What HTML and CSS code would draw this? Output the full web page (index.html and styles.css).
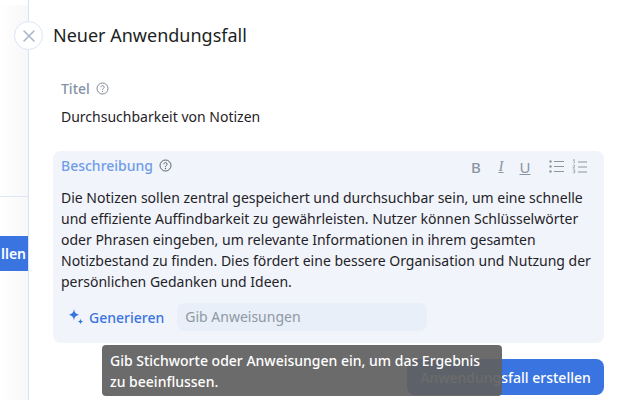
FILE: index.html
```html
<!DOCTYPE html>
<html lang="de">
<head>
  <meta charset="UTF-8" />
  <title>Neuer Anwendungsfall</title>
  <link rel="stylesheet" href="styles.css">
</head>
<body>
  <div class="app">
    <aside class="side">
      <div class="side-top"></div>
      <div class="side-mid">
        <div class="side-btn">llen</div>
      </div>
    </aside>
    <main class="panel">
      <button class="close" aria-label="Schließen">
        <svg width="14" height="14" viewBox="0 0 14 14"><path d="M2 2l10 10M12 2L2 12" stroke="#a6b5cc" stroke-width="1.5" stroke-linecap="round" fill="none"/></svg>
      </button>
      <h1 class="title">Neuer Anwendungsfall</h1>

      <section class="field">
        <div class="label">Titel
          <svg class="help" width="13" height="13" viewBox="0 0 13 13"><circle cx="6.5" cy="6.5" r="5.5" fill="none" stroke="#7c8794" stroke-width="1"/><path d="M4.9 5.2a1.6 1.6 0 1 1 2.5 1.3c-.6.4-.9.7-.9 1.3" fill="none" stroke="#7c8794"/><circle cx="6.5" cy="9.5" r=".7" fill="#7c8794"/></svg>
        </div>
        <div class="value">Durchsuchbarkeit von Notizen</div>
      </section>

      <section class="editor">
        <div class="editor-head">
          <div class="label label-active">Beschreibung
            <svg class="help" width="13" height="13" viewBox="0 0 13 13"><circle cx="6.5" cy="6.5" r="5.5" fill="none" stroke="#555f6b" stroke-width="1"/><path d="M4.9 5.2a1.6 1.6 0 1 1 2.5 1.3c-.6.4-.9.7-.9 1.3" fill="none" stroke="#555f6b"/><circle cx="6.5" cy="9.5" r=".7" fill="#555f6b"/></svg>
          </div>
          <div class="tools">
            <span class="tool tool-b">B</span>
            <span class="tool tool-i">I</span>
            <span class="tool tool-u">U</span>
            <svg class="tool-list" width="15" height="13" viewBox="0 0 15 13"><g fill="#8b95a3"><circle cx="1.500" cy="1.500" r="1.200"/><circle cx="1.500" cy="6.500" r="1.200"/><circle cx="1.500" cy="11.500" r="1.200"/></g><path d="M5 1.500h10M5 6.500h10M5 11.500h10" stroke="#8b95a3" stroke-width="1.200"/></svg>
            <svg class="tool-num" width="15" height="16" viewBox="0 0 15 16"><path d="M6 3h9M6 8h9M6 13h9" stroke="#8b95a3" stroke-width="1.200"/><path d="M1 1.200l1.200-.7v4M.8 6.600c.5-.7 2-.6 2 .3 0 .8-1.400 1.200-2 2.100h2.200M.9 11c.6-.5 2-.4 2 .4 0 .5-.5.7-1 .8.6 0 1.100.3 1.100.9 0 .9-1.500 1-2.200.4" fill="none" stroke="#8b95a3" stroke-width=".8"/></svg>
          </div>
        </div>
        <p class="text">Die Notizen sollen zentral gespeichert und durchsuchbar sein, um eine schnelle und effiziente Auffindbarkeit zu gewährleisten. Nutzer können Schlüsselwörter oder Phrasen eingeben, um relevante Informationen in ihrem gesamten Notizbestand zu finden. Dies fördert eine bessere Organisation und Nutzung der persönlichen Gedanken und Ideen.</p>
        <div class="gen-row">
          <span class="gen">
            <svg width="16" height="16" viewBox="0 0 16 16"><path d="M6 0c.6 3.800 1.800 5 5.500 5.800C7.800 6.600 6.600 7.800 6 11.500 5.400 7.800 4.200 6.600.5 5.800 4.200 5 5.400 3.800 6 0z" fill="#3674e0"/><path d="M12.500 9.500c.3 2 1 2.700 3 3-2 .4-2.700 1-3 3-.3-2-1-2.600-3-3 2-.3 2.700-1 3-3z" fill="#3674e0"/></svg>
            Generieren
          </span>
          <div class="prompt">Gib Anweisungen</div>
        </div>
      </section>

      <div class="actions">
        <button class="submit">Anwendungsfall erstellen</button>
      </div>
      <div class="tooltip">Gib Stichworte oder Anweisungen ein, um das Ergebnis zu beeinflussen.</div>
    </main>
  </div>
</body>
</html>
```

FILE: styles.css
```css
html, body {
  margin: 0;
  height: 400px;
  overflow: hidden;
  background: #fff;
}
body {
  font-family: "Noto Sans", Arial, sans-serif;
  font-size: 14px;
  color: #1f2328;
}
.app {
  display: flex;
  height: 400px;
}
.side {
  width: 28px;
  flex-shrink: 0;
  border-right: 1px solid #d6e4f5;
  background: linear-gradient(90deg, #fff, #f7f7f9);
}
.side-top {
  height: 191px;
  border-top: 5px solid #fff;
  border-bottom: 1px solid #dfe6f3;
}
.side-mid {
  padding-top: 39px;
}
.side-btn {
  height: 35px;
  line-height: 35px;
  padding-right: 2px;
  background: #3a74e0;
  color: #fff;
  font-weight: 600;
  text-align: right;
  overflow: hidden;
}
.panel {
  flex: 1;
  position: relative;
  padding: 0 14px 0 24px;
}
.close {
  position: absolute;
  left: -15px;
  top: 21px;
  width: 29px;
  height: 29px;
  padding: 0;
  border: 1px solid #dbe6f6;
  border-radius: 50%;
  background: #fff;
  display: flex;
  align-items: center;
  justify-content: center;
}
.title {
  margin: 0;
  padding-top: 23px;
  font-size: 18px;
  font-weight: 400;
  line-height: 24px;
  color: #1c1f23;
}
.field {
  padding: 32px 8px 0;
}
.label {
  display: flex;
  align-items: center;
  gap: 6px;
  line-height: 19px;
  color: #8492a6;
  font-weight: 500;
}
.label-active {
  color: #6f9de8;
}
.value {
  margin-top: 9px;
  line-height: 20px;
}
.editor {
  margin-top: 24px;
  height: 192px;
  box-sizing: border-box;
  padding: 3px 8px 0;
  border-radius: 8px;
  background: #f1f4fa;
}
.editor-head {
  display: flex;
  justify-content: space-between;
  align-items: center;
  height: 22px;
}
.tools {
  display: flex;
  align-items: center;
  gap: 13px;
  margin-right: 9px;
  margin-top: 3px;
  color: #8b95a3;
}
.tool {
  width: 12px;
  text-align: center;
  font-size: 15px;
}
.tool-b {
  font-weight: 500;
}
.tool-i {
  font-style: italic;
  text-decoration: underline;
  font-family: "Liberation Serif", serif;
}
.tool-u {
  margin-left: -1px;
  text-decoration: underline;
}
.tool-list {
  margin-left: 5px;
}
.tool-num {
  margin-left: -5px;
}
.text {
  margin: 11px 0 0;
  line-height: 21px;
  width: 535px;
}
.gen-row {
  display: flex;
  align-items: center;
  gap: 13px;
  margin-top: 11px;
  padding-left: 7px;
}
.gen {
  display: flex;
  align-items: center;
  gap: 5px;
  color: #3a74e0;
  font-weight: 500;
}
.prompt {
  width: 250px;
  height: 28px;
  box-sizing: border-box;
  padding-left: 8px;
  line-height: 28px;
  border-radius: 8px;
  background: #e8eff8;
  color: #8f98a3;
}
.actions {
  display: flex;
  justify-content: flex-end;
  margin-top: 16px;
}
.submit {
  width: 197px;
  height: 36px;
  border: 0;
  border-radius: 8px;
  background: #3a74e0;
  color: #fff;
  font: 500 14px "Noto Sans", Arial, sans-serif;
}
.tooltip {
  position: absolute;
  left: 73px;
  top: 345px;
  width: 384px;
  padding: 5px 8px 4px;
  border-radius: 4px;
  background: rgba(96, 96, 96, 0.93);
  color: #fff;
  font-weight: 500;
  line-height: 21px;
}
```
